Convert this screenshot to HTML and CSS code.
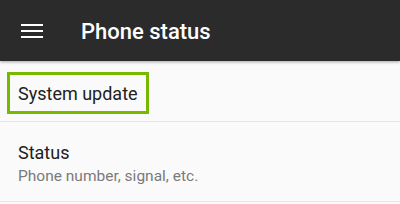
FILE: index.html
```html
<!DOCTYPE html>
<html lang="en">
<head>
    <meta charset="UTF-8">
    <meta name="viewport" content="width=device-width, initial-scale=1.0">
    <title>Phone status</title>
    <link rel="stylesheet" href="styles.css">
</head>
<body>
    <div class="toolbar">
        <div class="menu-icon">
            <svg width="22" height="14" viewBox="0 0 22 14">
                <rect x="0" y="0" width="22" height="2" fill="#ffffff"/>
                <rect x="0" y="6" width="22" height="2" fill="#ffffff"/>
                <rect x="0" y="12" width="22" height="2" fill="#ffffff"/>
            </svg>
        </div>
        <h1 class="title">Phone status</h1>
    </div>

    <div class="list">
        <div class="item item-update">
            <div class="highlight">System update</div>
        </div>
        <div class="item item-status">
            <div class="item-title">Status</div>
            <div class="item-summary">Phone number, signal, etc.</div>
        </div>
    </div>
</body>
</html>
```

FILE: styles.css
```css
* {
    margin: 0;
    padding: 0;
    box-sizing: border-box;
}

body {
    font-family: Roboto, 'Noto Sans', Arial, sans-serif;
    background-color: #fafafa;
    color: #212121;
    width: 400px;
    height: 204px;
    overflow: hidden;
}

.toolbar {
    height: 61px;
    background-color: #2b2b2b;
    display: flex;
    align-items: center;
    box-shadow: 0 1px 3px rgba(0, 0, 0, 0.35);
    position: relative;
}

.menu-icon {
    width: 22px;
    height: 14px;
    margin-left: 21px;
    margin-top: 1px;
    display: flex;
}

.title {
    margin-left: 38px;
    margin-top: 2px;
    color: #ffffff;
    font-size: 22px;
    font-weight: 500;
    line-height: 1;
}

.item {
    border-bottom: 1px solid #e6e6e6;
}

.item-update {
    height: 61px;
    padding: 11px 0 0 7px;
}

.highlight {
    display: inline-flex;
    align-items: center;
    width: 142px;
    height: 42px;
    border: 3px solid #76b900;
    padding-left: 8px;
    font-size: 18px;
}

.item-status {
    height: 80px;
    padding: 21px 0 0 18px;
}

.item-title {
    font-size: 18px;
    line-height: 20px;
}

.item-summary {
    margin-top: 4px;
    font-size: 15.5px;
    line-height: 18px;
    color: #7a7a7a;
}
```
